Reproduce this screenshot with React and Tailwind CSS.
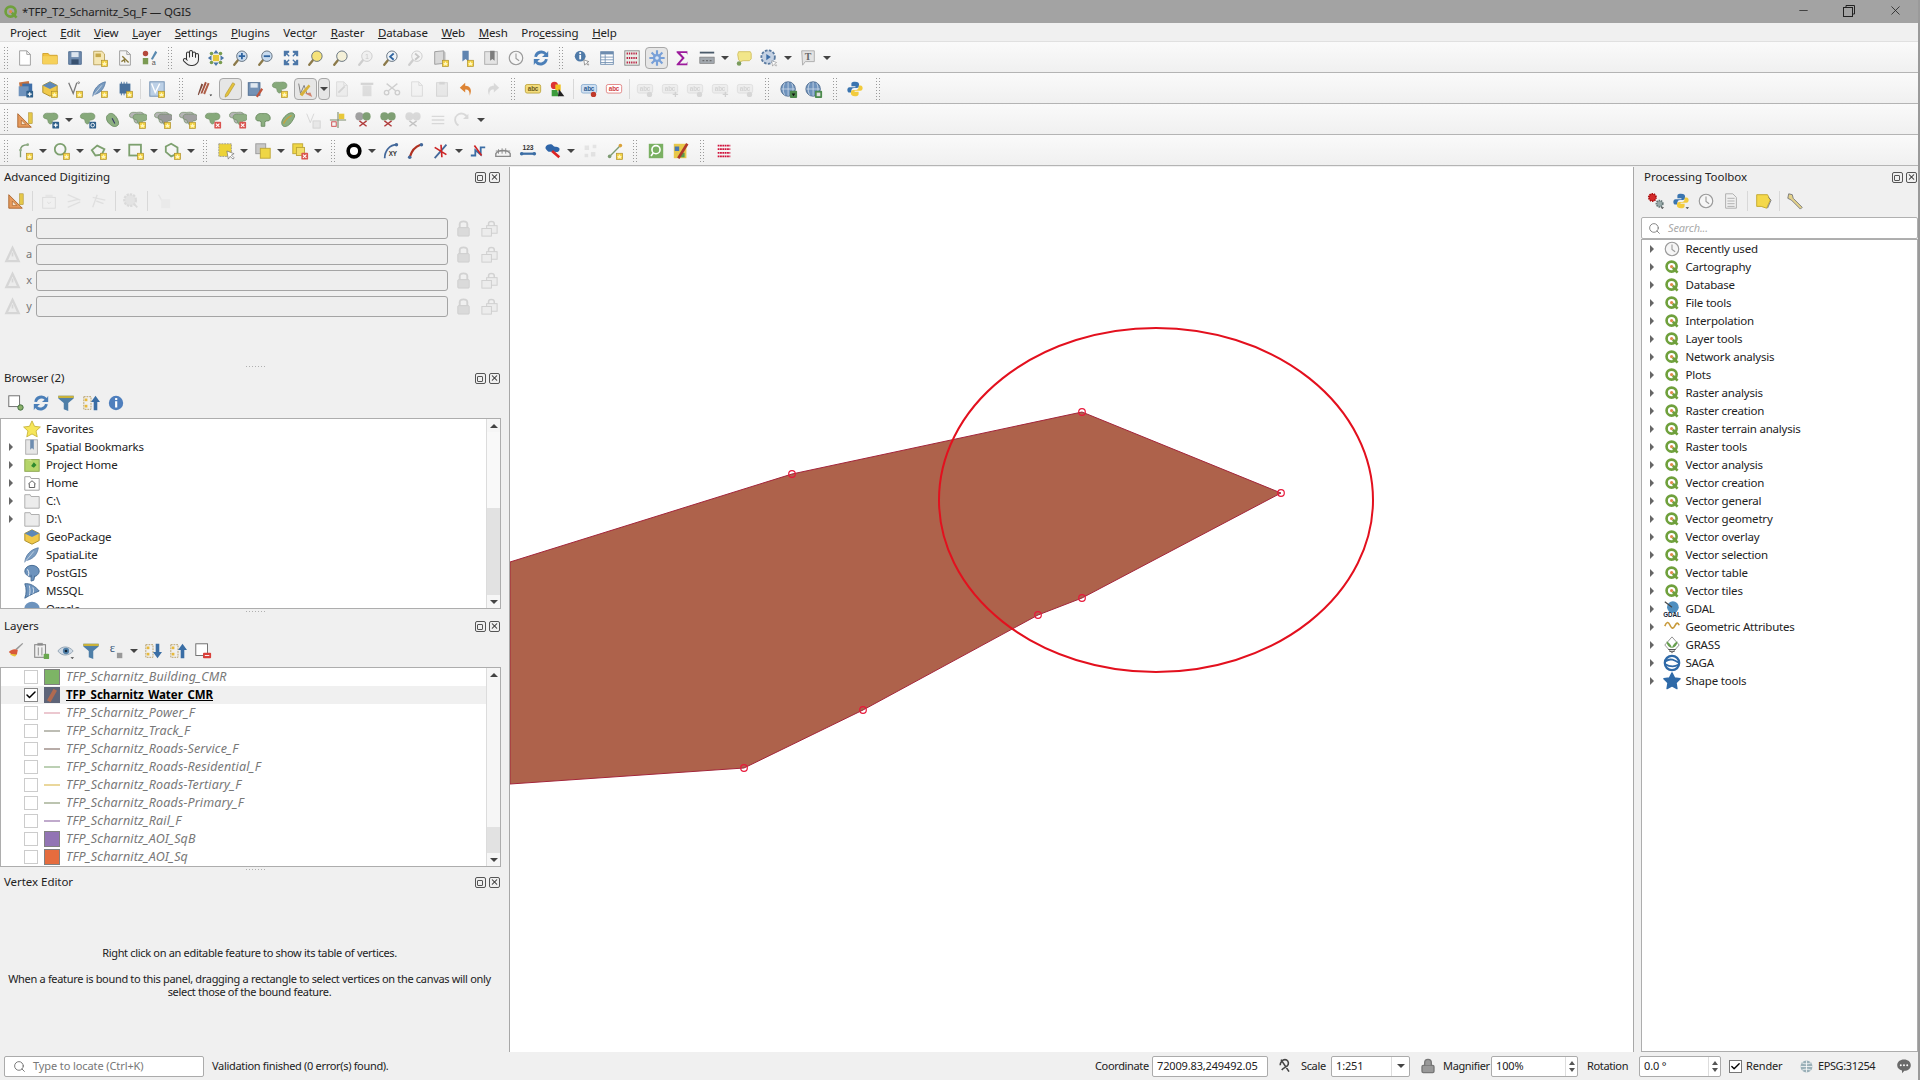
import React from 'react';
import { Hand, Lock, Search, Check, X, Minus } from 'lucide-react';

const S = ({ children, s = 18, v = '0 0 20 20' }) => <svg viewBox={v} width={s} height={s} className="block shrink-0">{children}</svg>;
const Star = () => <g><rect x="11.5" y="12.5" width="7" height="7" fill="#f3d347" stroke="#a8892a" strokeWidth=".7" /><path d="M15 13.5l.9 2 2 .1-1.5 1.2.5 1.9-1.9-1-1.9 1 .5-1.9-1.5-1.2 2-.1z" fill="#fff6c0" /></g>;
const Plus = () => <g><rect x="11.5" y="12" width="7.5" height="7.5" rx="1" fill="#2e5f8a" /><path d="M15.2 13.5v4.5M13 15.7h4.5" stroke="#fff" strokeWidth="1.3" /></g>;
const Cross = () => <g><rect x="11.5" y="12" width="7.5" height="7.5" rx="1" fill="#d9534f" /><path d="M13.3 14l3.8 3.7M17.1 14l-3.8 3.7" stroke="#fff" strokeWidth="1.2" /></g>;
const BlobP = ({ f = '#86a97a', t = '' }) => <path transform={t} d="M1.500 6c0-3 3-4 6-3.500s6-1 8.500.5 2 5.500-.5 6.500-3.500 0-4 2.500-2 3-3.500 2-1-3-2-4.500S1.500 9 1.500 6z" fill={f} stroke="#6a8a60" strokeWidth=".7" />;
const Blob = ({ b, g, f }) => <S>{g && <BlobP f="#b4b4b4" t="translate(-1 -1)" />}<BlobP f={f || (g ? '#8fae84' : '#86a97a')} t={g ? 'translate(3 1)' : ''} />{b}</S>;
const Mag = ({ f = '#d8e6f4', c, r = '#8c7a4a' }) => <S><path d="M7 12L2.500 17.500" stroke={r} strokeWidth="2.600" strokeLinecap="round" /><circle cx="11" cy="8" r="5.800" fill={f} stroke="#5d6b78" strokeWidth="1" />{c}</S>;
const Page = ({ c, f = '#fff' }) => <S><path d="M4 2h8l4 4v12H4z" fill={f} stroke="#9a9a9a" strokeWidth="1" /><path d="M12 2v4h4" fill="none" stroke="#9a9a9a" />{c}</S>;
const Q = () => <S s={16}><circle cx="9.500" cy="9.500" r="6.300" fill="none" stroke="#6fa03c" strokeWidth="3.300" /><path d="M11 11l6 6" stroke="#6fa03c" strokeWidth="3.300" /><circle cx="9.500" cy="9.500" r="2" fill="#e0894a" /></S>;
const Globe = ({ c }) => <S><circle cx="9" cy="10" r="8" fill="#6f93bd" stroke="#47678c" /><path d="M9 2v16M1.500 10h15M5 3.500c-2 4-2 9 0 13M13 3.500c2 4 2 9 0 13" stroke="#d6e2ee" strokeWidth=".8" fill="none" />{c}</S>;
const Lbl = ({ f = '#f3dc7c', c = '#6b5b1a', st = '#c0a640', t = 'abc', b }) => <S><rect x="1.500" y="5" width="17" height="9.500" rx="2" fill={f} stroke={st} /><text x="10" y="12.500" fontSize="7" fontWeight="700" textAnchor="middle" fill={c} fontFamily="Liberation Sans, sans-serif">{t}</text>{b}</S>;
const Arrow2 = ({ c, d }) => <S><rect x="2" y="3" width="8" height="14" fill="none" stroke="#b39b60" strokeDasharray="2 1" /><rect x="3" y="5" width="3" height="3" fill="#e8b93a" /><rect x="3" y="12" width="3" height="3" fill="#e8b93a" /><path d={d} fill={c || '#3a6ea5'} /></S>;

const I = {
  new: <Page />,
  open: <S><path d="M2 5h6l1.500 2H18v9.500H2z" fill="#f2c23f" stroke="#cfa02b" /><rect x="2" y="8" width="16" height="8.500" fill="#f6d15a" /></S>,
  save: <S><path d="M3 3h14v14H3z" fill="#6f8caf" stroke="#4e6b8f" /><rect x="6" y="3.500" width="8" height="5.500" fill="#dde6ef" /><rect x="6" y="11.500" width="8" height="5.500" fill="#37506f" /></S>,
  saveas: <S><path d="M3 2.500h9l3 3v12H3z" fill="#f5e7b5" stroke="#b9a25a" /><rect x="5" y="5" width="6" height="4" fill="#c7a94a" /><Star /></S>,
  print: <Page f="#f4f4f4" c={<path d="M7 8l7 7M6 14l3-2 1 3" stroke="#8a7a3a" strokeWidth="1.500" fill="none" />} />,
  style: <S><circle cx="5" cy="5" r="3" fill="#b5493c" /><rect x="2" y="10" width="6" height="7" fill="#7b9a52" /><path d="M16 2l-5 9 2 1 5-8z" fill="#5a8ab0" /><text x="14" y="18" fontSize="8" textAnchor="middle" fill="#555" fontFamily="Liberation Sans, sans-serif">a</text></S>,
  hand: <Hand size={18} strokeWidth={1.400} color="#333" />,
  pansel: <S><rect x="6.500" y="6.500" width="7" height="7" fill="#e6c838" /><path d="M10 1l3 4H7zM10 19l3-4H7zM1 10l4-3v6zM19 10l-4-3v6z" fill="#4c77a8" /><circle cx="5" cy="5" r="2" fill="#7a9c4f" /><circle cx="15" cy="5" r="2" fill="#7a9c4f" /><circle cx="5" cy="15" r="2" fill="#7a9c4f" /><circle cx="15" cy="15" r="2" fill="#7a9c4f" /></S>,
  zin: <Mag f="#c9dbee" c={<path d="M11 4.500v7M7.500 8h7" stroke="#2f64a0" strokeWidth="2" />} />,
  zout: <Mag f="#c9dbee" c={<path d="M7.500 8h7" stroke="#2f64a0" strokeWidth="2" />} />,
  zfull: <S><path d="M2 2h6v2L6 5l2.500 2.500-1 1L5 6 4 8H2zM18 2v6h-2l-1-2-2.500 2.500-1-1L14 5l-2-1V2zM2 18v-6h2l1 2 2.500-2.500 1 1L6 15l2 1v2zM18 18h-6v-2l2-1-2.500-2.500 1-1L15 14l1-2h2z" fill="#4c77a8" /></S>,
  zsel: <Mag f="#f5e27a" />,
  zlayer: <Mag f="#f4f0d8" />,
  znat: <Mag c={<text x="11" y="11" fontSize="8" textAnchor="middle" fill="#666" fontFamily="Liberation Sans, sans-serif">1</text>} />,
  zlast: <Mag f="#eef3f8" c={<path d="M13 5l-4 3.500 4 3.500" stroke="#2f64a0" strokeWidth="2" fill="none" />} />,
  znext: <Mag f="#eef3f8" c={<path d="M9 5l4 3.500-4 3.500" stroke="#2f64a0" strokeWidth="2" fill="none" />} />,
  newmap: <S><path d="M3 3l10-1v14l-10 1z" fill="#d9d9d9" stroke="#999" /><path d="M13 2l2 2v12l-2 0z" fill="#bbb" /><Star /></S>,
  bmnew: <S><path d="M6 2h7v12l-3.500-3L6 14z" fill="#5f84b0" /><Star /></S>,
  bmshow: <S><rect x="3" y="3" width="14" height="14" fill="#e4e4e4" stroke="#aaa" /><path d="M9 2h5v11l-2.500-2L9 13z" fill="#7d7d7d" /></S>,
  clock: <S><circle cx="10" cy="10" r="7.500" fill="#f6f6f6" stroke="#9a9a9a" strokeWidth="1.300" /><path d="M10 5v5.500l3.500 2.500" stroke="#9a9a9a" strokeWidth="1.200" fill="none" /></S>,
  refresh: <S><path d="M16.500 4.500A8 8 0 002.500 8.500l3 .5a5 5 0 018.500-2.500L11 9h7V2zM3.500 15.500A8 8 0 0017.500 11.500l-3-.5A5 5 0 016 13.500L9 11H2v7z" fill="#4b7fb8" /></S>,
  ident: <S><circle cx="8" cy="8" r="6" fill="#4f7aa8" /><rect x="7" y="6.500" width="2" height="5" fill="#fff" /><rect x="7" y="3.500" width="2" height="2" fill="#fff" /><path d="M12 12l1 6 1.500-2 2.500 2 .5-1-2-2 2-1z" fill="#fff" stroke="#666" strokeWidth=".7" /></S>,
  table: <S><rect x="3" y="3" width="14" height="14" fill="#fff" stroke="#6d8caf" /><rect x="3" y="3" width="14" height="3" fill="#6d8caf" /><path d="M3 9h14M3 12h14M3 15h14M8 6v11" stroke="#6d8caf" strokeWidth=".9" /></S>,
  calc: <S><rect x="2" y="2" width="16" height="16" fill="#e8eee8" stroke="#888" /><path d="M4 5h12M4 10h12M4 15h12" stroke="#b24" strokeWidth="2" strokeDasharray="1.500 1" /></S>,
  stats: <S><circle cx="10" cy="10" r="4.500" fill="#78a0d8" /><path d="M10 1.500v17M1.500 10h17M4 4l12 12M16 4L4 16" stroke="#78a0d8" strokeWidth="2.400" /><circle cx="10" cy="10" r="2" fill="#dce8f6" /></S>,
  sigma: <S><path d="M4 2.500h12v4l-1-2H8l5 5.500-5.500 6H15l1-2v4H4v-1l6-7-6-6z" fill="#9c1a9c" /></S>,
  measure: <S><rect x="2" y="3" width="16" height="2" fill="#4a5a6a" /><rect x="2" y="9" width="16" height="7" fill="#a2a8ae" stroke="#777" strokeWidth=".7" /><path d="M5 13h2M9 13h2M13 13h2" stroke="#555" /></S>,
  tip: <S><path d="M4 3h13l1 2v6l-2 2h-7l-3 1-2-2-1-6z" fill="#f2e68a" stroke="#d0c060" /><circle cx="4.500" cy="16" r="2.500" fill="#7a9c5c" /></S>,
  action: <S><circle cx="9" cy="9" r="7.500" fill="#c5d2e3" stroke="#5a7aa0" strokeWidth="2" strokeDasharray="3 1.500" /><path d="M7 5.500l5 3.500-5 3.500z" fill="#3c6ea8" /><path d="M13 13l1 6 1.500-2 2.500 2 .5-1-2-2 2-1z" fill="#fff" stroke="#888" strokeWidth=".6" /></S>,
  ttext: <S><path d="M3 2h14v12H7l-3 4z" fill="#e3e3e3" stroke="#aaa" /><text x="10" y="12" fontSize="11" fontWeight="700" textAnchor="middle" fill="#666" fontFamily="Liberation Serif, serif">T</text></S>,
  dsm: <S><rect x="4" y="2" width="11" height="11" fill="#c4713f" transform="rotate(-8 9 7)" /><rect x="7" y="4" width="11" height="11" fill="#3f6fa8" /><rect x="3" y="7" width="11" height="11" fill="#6f93bd" /><Plus /></S>,
  gpkg: <S><path d="M10 2l8 4v8l-8 4-8-4V6z" fill="#f0c94a" stroke="#a88a22" /><path d="M10 2l8 4-8 4-8-4z" fill="#5d88b8" /><Star /></S>,
  vshp: <S><path d="M3 3l5 12 4-12" fill="none" stroke="#777" strokeWidth="1.400" /><circle cx="14" cy="3" r="1" fill="none" stroke="#777" /><Star /></S>,
  feat: <S><path d="M2 18c1-8 6-14 14-16-1 6-4 12-12 14z" fill="#7a9cc0" stroke="#5c7fa8" /><path d="M2 18l10-12" stroke="#fff" strokeWidth=".6" /><Star /></S>,
  chip: <S><rect x="4" y="4" width="12" height="11" fill="#48709c" /><path d="M6 2v3M9 2v3M12 2v3M6 14v3M9 14v3" stroke="#48709c" /><Star /></S>,
  vmesh: <S><rect x="2" y="2" width="16" height="16" fill="#bcd0e6" stroke="#6d8caf" /><path d="M4 4l4 10 5-10" fill="none" stroke="#fff" strokeWidth="1.500" /><Star /></S>,
  edits: <S><path d="M8 15L13 3l2 1-5 12z" fill="#b06048" /><path d="M5 15L10 2l2 1-5 12z" fill="#a4503c" /><path d="M2 16L6 4l2 1-5 12z" fill="#7d4a3c" /><path d="M15 16l3 0-1.500 2z" fill="#333" /></S>,
  pencil: <S><path d="M5 16l8-13 2.500 1.500L7.500 17.500 4.500 19z" fill="#e4c23a" stroke="#a88a22" strokeWidth=".6" /></S>,
  saveedit: <S><rect x="2.500" y="3" width="13" height="14" fill="#7391b5" stroke="#4e6b8f" /><rect x="5" y="3.500" width="8" height="5" fill="#e0e8f0" /><path d="M11 18l6-9 2 1.500-6 9z" fill="#c0553c" /></S>,
  addstar: <Blob b={<Star />} />,
  vertex: <S><path d="M3 4l2 11 4-9 3 9" stroke="#777" fill="none" /><path d="M4 16L14 5l2 2L7 18z" fill="#d7b23a" /><path d="M10 15l6-1 2 5z" fill="#c75a3a" opacity=".7" /></S>,
  attr: <Page f="#ddd" c={<path d="M6 14l7-7" stroke="#888" strokeWidth="2" />} />,
  del: <S><path d="M5 6h10v12H5z" fill="#aaa" /><rect x="3" y="3" width="14" height="2.500" fill="#888" /></S>,
  cut: <S><circle cx="4" cy="14" r="2.500" fill="none" stroke="#777" strokeWidth="1.500" /><circle cx="16" cy="14" r="2.500" fill="none" stroke="#777" strokeWidth="1.500" /><path d="M6 12L16 4M14 12L4 4" stroke="#777" strokeWidth="1.500" /></S>,
  copy: <Page f="#eee" />,
  paste: <S><rect x="4" y="3" width="12" height="15" fill="#ccc" stroke="#888" /><rect x="7" y="2" width="6" height="3" fill="#888" /></S>,
  undo: <S><path d="M8 3L2 8.500 8 14v-3.500c4 0 5 2 5 7 3-6 1-11-5-11z" fill="#dd8434" /></S>,
  redo: <S><path d="M12 3l6 5.500L12 14v-3.500c-4 0-5 2-5 7-3-6-1-11 5-11z" fill="#999" /></S>,
  labY: <Lbl />,
  labC: <S><circle cx="6" cy="6" r="4" fill="#d33" /><rect x="7" y="5" width="6" height="7" fill="#f0c020" /><path d="M3 11h6l2 7H3z" fill="#3c9c3c" /><path d="M11 10l6 8h-7z" fill="#222" /></S>,
  labP: <Lbl f="#cfe0f2" c="#2a5b90" st="#8fb0d0" b={<circle cx="15" cy="16" r="3" fill="#c0392b" />} />,
  labR: <Lbl f="#fff" c="#d04040" st="#e08080" />,
  lab1: <Lbl f="#ddd" c="#888" st="#aaa" b={<circle cx="15" cy="16" r="3" fill="#999" />} />,
  lab2: <Lbl f="#ddd" c="#888" st="#aaa" b={<path d="M13 16h6M16 13v6" stroke="#888" strokeWidth="1.500" />} />,
  globe1: <Globe c={<g><rect x="11" y="12" width="8" height="8" rx="1" fill="#4c8a4c" /><path d="M13 15l2 3 2-3z" fill="#111" /></g>} />,
  globe2: <Globe c={<g><rect x="11" y="12" width="8" height="8" rx="1" fill="#4c8a4c" /><rect x="13" y="14" width="4" height="4" fill="#ddd" /></g>} />,
  python: <S><path d="M10 2c-4 0-4 1.500-4 3v2h4.500v1H4C2 8 1.500 10 1.500 11s.5 3 2.500 3h2v-2c0-1.500 1-3 3-3h3c1.500 0 2.500-1 2.500-2.500V5c0-1.500-1-3-4.500-3z" fill="#3b75b0" /><path d="M10 18c4 0 4-1.500 4-3v-2H9.500v-1H16c2 0 2.500-2 2.500-3s-.5-3-2.500-3h-2v2c0 1.500-1 3-3 3H8c-1.500 0-2.500 1-2.500 2.500V15c0 1.500 1 3 4.500 3z" fill="#f2cb3c" /></S>,
  ruler: <S><path d="M2 3v15h15z" fill="#e69a5c" stroke="#a8622a" /><path d="M6 10v5h5z" fill="#f5e5d0" stroke="#a8622a" strokeWidth=".7" /><rect x="14" y="2" width="4" height="12" fill="#e5c84a" stroke="#a88a22" strokeWidth=".6" /></S>,
  addp: <Blob b={<Plus />} />,
  addrec: <Blob b={<g><rect x="11.500" y="12" width="7.500" height="7.500" rx="1" fill="#2e5f8a" /><circle cx="15.200" cy="15.700" r="2" fill="none" stroke="#fff" /></g>} />,
  leaf: <S><path d="M3 6c2-4 6-4 8-2 3 2 6 8 5 11-2 3-6 3-9 0-3-2-5-6-4-9z" fill="#8caf80" stroke="#6a8a60" /><path d="M9 8l3 6" stroke="#336" strokeWidth="1.200" /></S>,
  b1: <Blob b={<Star />} g />,
  b2: <Blob b={<Star />} g f="#999" />,
  b3: <Blob b={<Star />} f="#a0a0a0" g />,
  bx: <Blob b={<Cross />} />,
  bx2: <Blob b={<Cross />} g />,
  bsplit: <S><path d="M2 8c0-4 4-6 8-5 4-1 8 1 8 5 0 3-2 3-4 3l-2 1v5H8v-5l-2-1c-2 0-4 0-4-3z" fill="#8caf80" stroke="#6a8a60" /></S>,
  bean: <S><path d="M3 13c0-4 6-11 11-11 3 0 4 3 3 5-2 4-5 9-9 10-3 1-5-1-5-4z" fill="#8caf80" stroke="#6a8a60" /><path d="M5 14c2-4 5-7 9-9" stroke="#c9a23a" strokeWidth="1.500" fill="none" /></S>,
  vsm: <S><path d="M3 3l4 10 4-10" stroke="#888" fill="none" /><rect x="10" y="11" width="8" height="8" fill="#ccc" stroke="#888" /></S>,
  spl: <S><path d="M10 1v18M1 10h18" stroke="#7a8a6a" strokeWidth="1.200" /><rect x="11" y="3" width="6" height="6" fill="#e8c83a" /><rect x="3" y="12" width="5" height="5" fill="none" stroke="#c44" /></S>,
  cutb: <S><circle cx="6" cy="6" r="4.500" fill="#a0a0a0" /><circle cx="14" cy="6" r="4.500" fill="#7f9f74" /><path d="M6 11l8 6M14 11l-8 6" stroke="#b03a3a" strokeWidth="1.500" /></S>,
  cutg: <S><circle cx="6" cy="6" r="4.500" fill="#7f9f74" /><circle cx="14" cy="6" r="4.500" fill="#7f9f74" /><path d="M6 11l8 6M14 11l-8 6" stroke="#b03a3a" strokeWidth="1.500" /></S>,
  lines: <S><path d="M3 6h14M3 10h14M3 14h14" stroke="#999" strokeWidth="1.500" /></S>,
  rot: <S><path d="M5 16a7 7 0 1 1 10-8" stroke="#999" fill="none" strokeWidth="2" /><path d="M16 3v6h-6z" fill="#999" /></S>,
  dLine: <S><path d="M5 17V9c0-3 2-6 8-6" stroke="#7d9b72" strokeWidth="1.500" fill="none" /><circle cx="5" cy="9" r="1.500" fill="#8fae84" /><circle cx="13" cy="3" r="1.500" fill="#8fae84" /><Star /></S>,
  dCirc: <S><circle cx="8" cy="8" r="6" fill="none" stroke="#7da06f" strokeWidth="2" /><Star /></S>,
  dCirc2: <S><path d="M2 9l6-5 8 4-3 6-7 1z" fill="none" stroke="#7da06f" strokeWidth="2" /><Star /></S>,
  dRect: <S><rect x="2.500" y="3" width="13" height="12" fill="none" stroke="#7da06f" strokeWidth="2" /><Star /></S>,
  dPoly: <S><path d="M8 2l7 4v7l-7 3-6-5V5z" fill="none" stroke="#7da06f" strokeWidth="2" /><Star /></S>,
  sel: <S><rect x="2" y="2" width="14" height="14" fill="#edd338" stroke="#999" strokeDasharray="2 1" /><path d="M11 10l1.500 9 2-3 3.500 3 1-1.500-3-3 3-1.500z" fill="#fff" stroke="#666" strokeWidth=".7" /></S>,
  sel2: <S><rect x="2" y="2" width="11" height="11" fill="#c8c8c8" stroke="#999" /><rect x="7" y="7" width="11" height="11" fill="#efd645" stroke="#bda534" /></S>,
  sel3: <S><rect x="2" y="2" width="11" height="11" fill="#efd645" stroke="#bda534" /><rect x="6" y="6" width="9" height="9" fill="#f1dd6a" stroke="#bda534" /><Cross /></S>,
  ring: <S><circle cx="10" cy="10" r="6.500" fill="#fff" stroke="#000" strokeWidth="4" /></S>,
  xy: <S><path d="M3 18C3 10 8 3 17 3" stroke="#44689a" strokeWidth="2" fill="none" /><circle cx="16" cy="3" r="2" fill="#44689a" /><text x="12" y="16" fontSize="7" fontWeight="700" textAnchor="middle" fill="#333" fontFamily="Liberation Sans, sans-serif">XY</text></S>,
  arc: <S><path d="M3 17C5 10 9 5 15 3" stroke="#b03020" strokeWidth="2.500" fill="none" /><circle cx="3" cy="17" r="2" fill="#44689a" /><circle cx="16" cy="3" r="2" fill="#44689a" /></S>,
  snap: <S><path d="M3 18L16 3" stroke="#44689a" strokeWidth="2" /><path d="M3 6l13 8M10 3l1 14" stroke="#cc2222" strokeWidth="1.800" /></S>,
  topo: <S><path d="M2 15h5V9l6 5 0-8 5 0" stroke="#3c6ea5" strokeWidth="2" fill="none" /><path d="M6 4l8 11" stroke="#cc2222" strokeWidth="1.800" /></S>,
  bridge: <S><path d="M2 13c3-5 13-5 16 0v3H2z" fill="none" stroke="#888" strokeWidth="1.500" /><path d="M2 10h16M5 8v5M9 7v6M13 7v6" stroke="#888" /></S>,
  n123: <S><text x="10" y="9" fontSize="7.500" fontWeight="700" textAnchor="middle" fill="#333" fontFamily="Liberation Sans, sans-serif">123</text><path d="M2 13h16" stroke="#3c6ea5" strokeWidth="2.500" /><circle cx="3" cy="13" r="2" fill="#3c6ea5" /><circle cx="17" cy="13" r="2" fill="#3c6ea5" /></S>,
  tra: <S><path d="M2 5c2-3 7-3 8-1s6 1 7 3-1 5-4 4-7 1-9-1-3-3-2-5z" fill="#2f65a8" /><path d="M9 10l8 7" stroke="#d22" strokeWidth="3" /></S>,
  nodes: <S><path d="M4 4h5v5H4zM11 11h5v5h-5zM4 13h4v4H4zM13 3h4v4h-4z" fill="#bbb" /></S>,
  tree: <S><path d="M4 16L16 4" stroke="#7d9b72" strokeWidth="1.500" /><circle cx="4" cy="16" r="2" fill="#7d9b72" /><circle cx="16" cy="4" r="2" fill="#d9a23a" /><Star /></S>,
  qsearch: <S><rect x="2" y="2" width="16" height="16" fill="#7ab062" /><circle cx="10" cy="8.500" r="4.500" fill="none" stroke="#fff" strokeWidth="1.800" /><path d="M7 12l-2.500 3.500" stroke="#fff" strokeWidth="1.800" /></S>,
  qdig: <S><rect x="2" y="2" width="14" height="16" fill="#e8c84a" /><rect x="3" y="5" width="5" height="5" fill="#4a78b0" /><rect x="9" y="12" width="5" height="5" fill="#5a9c4c" /><path d="M17 2L7 18" stroke="#b03a2a" strokeWidth="3" /></S>,
  dots: <S><path d="M3 4h14M3 8h14M3 12h14M3 16h14" stroke="#d0103a" strokeWidth="2" strokeDasharray="2 .6" /></S>,
  warn: <S s={19}><path d="M10 3l6.500 14H3.500z" fill="#ececec" stroke="#d6d6d6" strokeWidth="2.400" /><path d="M10 8v4" stroke="#d6d6d6" strokeWidth="1.800" /></S>,
  lock: <S s={19}><path d="M6 9V5.500c0-4 8-4 8 0V9" fill="none" stroke="#d2d2d2" strokeWidth="2" /><rect x="4" y="9" width="12" height="9" rx="1" fill="#dadada" stroke="#cfcfcf" /></S>,
  lock2: <S s={19}><path d="M9 8V5c0-3 6-3 6 0v4" fill="none" stroke="#d2d2d2" strokeWidth="1.600" /><rect x="7" y="7" width="11" height="8" fill="#ececec" stroke="#cfcfcf" /><rect x="2" y="10" width="10" height="8" fill="#ececec" stroke="#cfcfcf" /></S>,
  pd1: <S><rect x="3" y="6" width="14" height="12" fill="none" stroke="#aaa" /><path d="M6 3h8v3H6z" fill="#ccc" /><path d="M8 11l2 2 2-2" stroke="#aaa" fill="none" /></S>,
  pd2: <S><path d="M3 3l14 6M3 17l14-6M3 11l12-3" stroke="#bbb" strokeWidth="1.600" /></S>,
  pd3: <S><path d="M3 17L8 3M3 6l14 3M7 10l8 3" stroke="#bbb" strokeWidth="1.600" /></S>,
  pd4: <S><circle cx="9" cy="9" r="6.500" fill="#c8c8c8" stroke="#aaa" strokeWidth="2.500" strokeDasharray="2.500 1.200" /><path d="M14 14l3 3" stroke="#aaa" strokeWidth="2" /></S>,
  pd5: <S><path d="M5 3l4 7" stroke="#ccc" strokeWidth="1.500" /><rect x="8" y="8" width="10" height="10" fill="#ddd" /></S>,
  bNew: <S><rect x="2" y="2" width="12" height="12" fill="#fff" stroke="#666" /><circle cx="15" cy="15" r="3" fill="#8ab06a" stroke="#3c6a3c" /></S>,
  filter: <S><path d="M1.500 2h17v3l-6 5v9l-5-2v-7L1.500 5z" fill="#4f7fa8" /><rect x="1.500" y="2" width="17" height="2.500" fill="#c9b23a" /></S>,
  expand: <Arrow2 d="M13 18V9H10l5-7 5 7h-3v9z" />,
  expandD: <Arrow2 d="M13 2v9H10l5 7 5-7h-3V2z" />,
  info: <S><circle cx="10" cy="10" r="8" fill="#4f7fbd" /><rect x="9" y="8" width="2.400" height="7" fill="#fff" /><rect x="9" y="4.500" width="2.400" height="2.200" fill="#fff" /></S>,
  brush: <S><path d="M18 2L11 9l-2-1 8-7z" fill="#999" /><path d="M2 11c3-3 7-4 10-2l-1 5c-3 2-6 0-9-3z" fill="#d85a3a" /><path d="M3 13c2 2 4 3 6 3l2-2" fill="#e8c43a" /></S>,
  layAdd: <S><rect x="6" y="1" width="6" height="3" fill="#999" /><rect x="3" y="3" width="12" height="14" fill="none" stroke="#888" strokeWidth="1.200" /><path d="M7 6v9M11 6v9" stroke="#888" /><rect x="13" y="13" width="6" height="6" rx="1" fill="#6aa84f" /></S>,
  eye: <S><path d="M1 10c4-6 12-6 17 0-5 6-13 6-17 0z" fill="#cfd9e4" stroke="#8fa0b0" /><circle cx="10" cy="10" r="3.500" fill="#4f7fa8" /><circle cx="10" cy="10" r="1.500" fill="#123" /><path d="M15 17l2 2 2-2z" fill="#444" /></S>,
  eps: <S><text x="6" y="11" fontSize="14" fill="#35557a" textAnchor="middle" fontFamily="Liberation Serif, serif">ε</text><rect x="11" y="12" width="6" height="6" fill="#999" /></S>,
  layDel: <S><rect x="2" y="2" width="13" height="13" fill="#fff" stroke="#666" /><rect x="10" y="12" width="9" height="6" rx="1" fill="#d9403a" /><path d="M12 15h5" stroke="#fff" /></S>,
  star: <S><path d="M10 1l2.800 6 6.500.8-4.800 4.400 1.300 6.500L10 15.500 4.200 18.700l1.300-6.500L.7 7.800 7.200 7z" fill="#f6e65a" stroke="#c8b43a" /></S>,
  bookm: <S><rect x="3" y="2" width="13" height="16" fill="#e6e6e6" stroke="#aaa" /><path d="M8 2h4v11l-2-2-2 2z" fill="#6e8db0" /></S>,
  projh: <S><rect x="2" y="4" width="16" height="13" fill="#b5d56a" stroke="#88a24a" /><path d="M9 11l3-4 3 3-3 3z" fill="#2e8a2e" /><path d="M2 4h7l1 2" fill="#cde08a" /></S>,
  homef: <S><path d="M2 3h6l1 2h9v13H2z" fill="#fff" stroke="#999" /><path d="M6 11l4-3.500 4 3.500M7 10.500V15h6v-4.500" fill="none" stroke="#555" /></S>,
  folder: <S><path d="M2 3h6l1 2h9v13H2z" fill="#ececec" stroke="#a8a8a8" /></S>,
  pg: <S><ellipse cx="10" cy="8" rx="8" ry="6.500" fill="#6d93bd" stroke="#3f6690" /><path d="M9 12v7l3-1 1-5" fill="#6d93bd" stroke="#3f6690" /><path d="M5 6c2 3 2 6 0 8" stroke="#fff" fill="none" /></S>,
  ms: <S><path d="M2 2c6-1 12 3 16 8-5 2-11 5-16 8 2-5 2-11 0-16z" fill="#6d93bd" stroke="#3f6690" /><path d="M7 4c1 4 1 8 0 11M11 6c1 3 1 5 0 7" stroke="#dfe8f0" fill="none" /></S>,
  orc: <S><ellipse cx="10" cy="9" rx="8.500" ry="7" fill="#6d93bd" /></S>,
  gear: <S><circle cx="6" cy="6" r="4" fill="#d42a2a" stroke="#a11" strokeDasharray="1.500 1" strokeWidth="2" /><circle cx="14" cy="13" r="3.500" fill="#9aa" stroke="#677" strokeDasharray="1.500 1" strokeWidth="2" /><path d="M15 17l2 2 2-2z" fill="#444" /></S>,
  pyd: <S><path d="M10 2c-4 0-4 1.500-4 3v2h4.500v1H4C2 8 1.500 10 1.500 11s.5 3 2.500 3h2v-2c0-1.500 1-3 3-3h3c1.500 0 2.500-1 2.500-2.500V5c0-1.500-1-3-4.500-3z" fill="#3b75b0" /><path d="M10 18c4 0 4-1.500 4-3v-2H9.500v-1H16c2 0 2.500-2 2.500-3s-.5-3-2.500-3h-2v2c0 1.500-1 3-3 3H8c-1.500 0-2.500 1-2.500 2.500V15c0 1.500 1 3 4.500 3z" fill="#f2cb3c" /><path d="M15 17l2 2 2-2z" fill="#444" /></S>,
  doc: <S><path d="M4 2h8l4 4v12H4z" fill="#f0f0f0" stroke="#aaa" /><path d="M6 7h8M6 10h8M6 13h8M6 16h8" stroke="#aaa" /></S>,
  tag: <S><path d="M3 3h12l3 6-4 9-6-2H3z" fill="#f4d84a" stroke="#c2a72a" /><path d="M16 6l3 3-4 9" stroke="#777" fill="none" /></S>,
  wrench: <S><path d="M3 2l4 1 1 4 10 10-2 2L6 9 2 7z" fill="#e4d28a" stroke="#777" /></S>,
  gdal: <S><circle cx="11" cy="8" r="6.500" fill="#4f8fc0" /><path d="M2 2l8 6" stroke="#444" strokeWidth="1.300" /><text x="10" y="18.500" fontSize="7" fontWeight="700" textAnchor="middle" fill="#123" fontFamily="Liberation Sans, sans-serif">GDAL</text></S>,
  wave: <S><path d="M2 9c2-5 4-5 5.500-1.500S11 13 13 9s3.500-4.500 5-1" stroke="#c89a3a" strokeWidth="1.800" fill="none" /></S>,
  grass: <S><path d="M10 1l8 9-8 9-8-9z" fill="#fff" stroke="#888" /><path d="M10 13C9 9 5 6 4 6c0 4 3 7 6 7 3 0 6-3 6-7-1 0-5 3-6 7z" fill="#68a050" /><path d="M6 15h8M7 17h6" stroke="#444" /></S>,
  saga: <S><circle cx="10" cy="10" r="8" fill="none" stroke="#2f6aa8" strokeWidth="2.500" /><path d="M3 8c5-4 10-1 15 2M2 11c5 3 10 4 15 1" stroke="#2f6aa8" strokeWidth="2" fill="none" /></S>,
  shape: <S><path d="M10 1l2.800 5.500 6.200 1-4.500 4.500 1 6.500L10 15.500 4.500 18.500l1-6.500L1 7.500l6.200-1z" fill="#2f6aa8" strokeLinejoin="round" stroke="#2f6aa8" strokeWidth="1.500" /></S>,
  gpkg0: <S><path d="M10 2l8 4v8l-8 4-8-4V6z" fill="#f0c94a" stroke="#a88a22" /><path d="M10 2l8 4-8 4-8-4z" fill="#5d88b8" /></S>,
  feat0: <S><path d="M2 18c1-8 6-14 15-16-1 6-4 12-13 14z" fill="#7a9cc0" stroke="#5c7fa8" /><path d="M2 18l10-12" stroke="#fff" strokeWidth=".6" /></S>,
};

const Arrow = () => <span className="block w-0 h-0 border-x-[4px] border-x-transparent border-t-[4px] border-t-[#444]" />;
const Handle = () => <span className="block w-[6px] h-[24px] bg-[radial-gradient(#9a9a9a_0.6px,transparent_0.8px)] bg-[length:3px_3px]" />;

function Tools({ items }) {
  return <>{items.map((t, k) => {
    const n = parseFloat(t.slice(1));
    if (t[0] === 'h' && n) return <span key={k} className="flex justify-center items-center shrink-0" style={{ width: n }}><Handle /></span>;
    if (t[0] === 'g' && n) return <span key={k} className="shrink-0" style={{ width: n }} />;
    if (t[0] === 's' && n) return <span key={k} className="flex justify-center shrink-0" style={{ width: n }}><span className="block w-px h-[20px] bg-[#d8d8d8]" /></span>;
    if (t === 'v') return <span key={k} className="flex justify-center shrink-0 w-[12px]"><Arrow /></span>;
    if (t === 'V') return <span key={k} className="flex justify-center shrink-0 w-[14px]"><Arrow /></span>;
    if (t === 'w') return <span key={k} className="flex justify-center items-center shrink-0 w-[12px] h-[22px] bg-[#e6e6e6] border border-[#a8a8a8] rounded-sm"><Arrow /></span>;
    if (t[0] === '~') return <span key={k} className="flex justify-center items-center w-[25px] shrink-0 opacity-30 grayscale">{I[t.slice(1)]}</span>;
    if (t[0] === '*') return <span key={k} className="flex justify-center items-center w-[25px] shrink-0"><span className="flex justify-center items-center w-[23px] h-[22px] bg-[#e6e6e6] border border-[#a8a8a8] rounded-sm">{I[t.slice(1)]}</span></span>;
    return <span key={k} className="flex justify-center items-center w-[25px] shrink-0">{I[t]}</span>;
  })}</>;
}

const Bar = ({ items }) => <div className="flex items-center h-[31px] pt-[1px] bg-linear-to-b from-[#fafafa] to-[#f0f0f0] border-b border-[#b4b4b4]"><Tools items={items} /></div>;

const rows = [
  ['h12', 'new', 'open', 'save', 'saveas', 'print', 'style', 'h16', 'hand', 'pansel', 'zin', 'zout', 'zfull', 'zsel', 'zlayer', '~znat', 'zlast', '~znext', 'newmap', 'bmnew', 'bmshow', 'clock', 'refresh', 'h16', 'ident', 'table', 'calc', '*stats', 'sigma', 'measure', 'v', 'tip', 'action', 'V', 'ttext', 'V'],
  ['h12', 'dsm', 'gpkg', 'vshp', 'feat', 'chip', 's7', 'vmesh', 'h23.5', 'edits', '*pencil', 'saveedit', 'addstar', '*vertex', 'w', '~attr', '~del', '~cut', '~copy', '~paste', 'undo', '~redo', 'h16', 'labY', 'labC', 's6', 'labP', 'labR', 's6', '~lab1', '~lab2', '~lab1', '~lab2', '~lab1', 'h19', 'globe1', 'globe2', 'h16', 'python', 'h20'],
  ['h12', 'ruler', 'g1', 'addp', 'v', 'addrec', 'leaf', 'b1', 'b2', 'b3', 'bx', 'bx2', 'bsplit', 'bean', '~vsm', 'spl', 'cutb', 'cutg', '~cutg', '~lines', '~rot', 'v'],
  ['h12', 'dLine', 'v', 'dCirc', 'v', 'dCirc2', 'v', 'dRect', 'v', 'dPoly', 'v', 'h16', 'sel', 'v', 'sel2', 'v', 'sel3', 'v', 'h17', 'ring', 'v', 'xy', 'arc', 'snap', 'v', 'topo', 'bridge', 'n123', 'tra', 'v', '~nodes', 'tree', 'h16', 'qsearch', 'qdig', 'h18', 'dots'],
];

const DockTitle = ({ children, right }) => (
  <div className={`flex items-center h-[20px] pl-[4px] shrink-0 ${right ? 'pr-[1px]' : 'pr-[9px]'}`}>
    <span className="flex-1 text-[#222] text-[11.5px] tracking-[-0.05px]">{children}</span>
    <span className="flex gap-[3px]">
      <span className="relative w-[11px] h-[11px] border border-[#555] rounded-[2px] flex items-end justify-start"><span className="block w-[6px] h-[6px] border border-[#555] rounded-[1px] ml-[1px] mb-[1px]" /></span>
      <span className="flex items-center justify-center w-[11px] h-[11px] border border-[#555] rounded-[2px]"><X size={10} strokeWidth={2.800} color="#333" /></span>
    </span>
  </div>
);
const ToolRow = ({ items, h = 'h-[30px]' }) => <div className={`flex items-center shrink-0 ${h}`}><Tools items={items} /></div>;
const Splitter = ({ h = 'h-[4px]' }) => <div className={`flex items-center justify-center shrink-0 ${h}`}><span className="block w-[20px] h-[3px] bg-[radial-gradient(#b0b0b0_0.5px,transparent_0.7px)] bg-[length:3px_3px]" /></div>;
const TriR = () => <span className="block w-0 h-0 border-y-[4px] border-y-transparent border-l-[4px] border-l-[#666]" />;
const Scroll = ({ children }) => (
  <div className="w-[14px] shrink-0 flex flex-col bg-[#f6f6f6] border-l border-[#dcdcdc]">
    <div className="h-[13px] flex items-center justify-center shrink-0"><span className="block w-0 h-0 border-x-[4px] border-x-transparent border-b-[4px] border-b-[#444]" /></div>
    <div className="flex-1 flex flex-col">{children}</div>
    <div className="h-[13px] flex items-center justify-center shrink-0"><span className="block w-0 h-0 border-x-[4px] border-x-transparent border-t-[4px] border-t-[#444]" /></div>
  </div>
);

const Field = ({ l, warn }) => (
  <div className="flex items-center h-[26px] shrink-0">
    <span className="flex justify-center w-[24px] shrink-0">{warn && I.warn}</span>
    <span className="w-[12px] text-[#777] text-center pr-[2px] shrink-0">{l}</span>
    <span className="block w-[412px] h-[21px] bg-[#eeeeee] border border-[#a4a4a4] rounded-[3px] shrink-0" />
    <span className="flex justify-center w-[30px] shrink-0">{I.lock}</span>
    <span className="flex justify-center w-[22px] shrink-0">{I.lock2}</span>
  </div>
);

const browser = [['star', 'Favorites', 0], ['bookm', 'Spatial Bookmarks', 1], ['projh', 'Project Home', 1], ['homef', 'Home', 1], ['folder', 'C:\\', 1], ['folder', 'D:\\', 1], ['gpkg0', 'GeoPackage', 0], ['feat0', 'SpatiaLite', 0], ['pg', 'PostGIS', 0], ['ms', 'MSSQL', 0], ['orc', 'Oracle', 0]];

const layers = [
  ['TFP_Scharnitz_Building_CMR', '#7db465', 'fill'], ['TFP_Scharnitz_Water_CMR', '', 'cur'], ['TFP_Scharnitz_Power_F', '#ecc8d0'], ['TFP_Scharnitz_Track_F', '#bdbdb4'],
  ['TFP_Scharnitz_Roads-Service_F', '#b8aca8'], ['TFP_Scharnitz_Roads-Residential_F', '#bcd0b4'], ['TFP_Scharnitz_Roads-Tertiary_F', '#ead79c'], ['TFP_Scharnitz_Roads-Primary_F', '#bcc4b0'],
  ['TFP_Scharnitz_Rail_F', '#c0aacc'], ['TFP_Scharnitz_AOI_SqB', '#9274b4', 'fill'], ['TFP_Scharnitz_AOI_Sq', '#e56c3e', 'fill'],
];
const tools = ['Cartography', 'Database', 'File tools', 'Interpolation', 'Layer tools', 'Network analysis', 'Plots', 'Raster analysis', 'Raster creation', 'Raster terrain analysis', 'Raster tools', 'Vector analysis', 'Vector creation', 'Vector general', 'Vector geometry', 'Vector overlay', 'Vector selection', 'Vector table', 'Vector tiles'];
const extra = [['gdal', 'GDAL'], ['wave', 'Geometric Attributes'], ['grass', 'GRASS'], ['saga', 'SAGA'], ['shape', 'Shape tools']];

const TTRow = ({ icon, t }) => (
  <div className="flex items-center h-[18px] shrink-0">
    <span className="flex justify-center w-[19.5px] pl-[1px]"><TriR /></span>
    <span className="flex justify-center items-center w-[20px]">{icon}</span>
    <span className="ml-[4px] text-[#222] text-[11.5px] tracking-[-0.2px]">{t}</span>
  </div>
);

const Stat = ({ w, children }) => <span className="block shrink-0 text-[#222] tracking-[-0.35px]" style={{ width: w }}>{children}</span>;
const Spin = () => <span className="flex flex-col items-center gap-[3px] ml-auto w-[12px] border-l border-[#ddd] h-full justify-center"><span className="block w-0 h-0 border-x-[3px] border-x-transparent border-b-[4px] border-b-[#555]" /><span className="block w-0 h-0 border-x-[3px] border-x-transparent border-t-[4px] border-t-[#555]" /></span>;

const Box = ({ className, children }) => <span className={`flex items-center h-[21px] bg-white border border-[#ababab] rounded-[2px] pl-[4px] shrink-0 text-[#222] ${className}`}>{children}</span>;

const menus = [['Pro', 'j', 'ect'], ['', 'E', 'dit'], ['', 'V', 'iew'], ['', 'L', 'ayer'], ['', 'S', 'ettings'], ['', 'P', 'lugins'], ['Vect', 'o', 'r'], ['', 'R', 'aster'], ['', 'D', 'atabase'], ['', 'W', 'eb'], ['', 'M', 'esh'], ['Pro', 'c', 'essing'], ['', 'H', 'elp']];

export default function App() {
  return (
    <div className="w-[1920px] h-[1080px] overflow-hidden flex flex-col bg-[#f0f0f0] border-r-2 border-[#9a9a9a] font-['Noto_Sans',sans-serif] text-[11px] leading-[14px] text-[#222] tracking-[-0.15px]">
      <div className="flex items-center h-[23px] bg-[#a3a3a3] shrink-0">
        <span className="ml-[3px] mr-[3px]"><Q /></span>
        <span className="flex-1 text-[#222] text-[11.5px]">*TFP_T2_Scharnitz_Sq_F — QGIS</span>
        <span className="flex items-center justify-center w-[46px] mb-[2px]"><Minus size={13} strokeWidth={1.400} color="#222" /></span>
        <span className="flex items-center justify-center w-[46px] mb-[2px]"><svg width="12" height="12" viewBox="0 0 12 12" fill="none" stroke="#222"><rect x=".5" y="2.500" width="9" height="9" /><path d="M3 2.500V.5h8.500V9H9.500" /></svg></span>
        <span className="flex items-center justify-center w-[46px] mb-[2px]"><X size={15} strokeWidth={1.300} color="#222" /></span>
      </div>
      <div className="flex items-center h-[19px] pl-[10px] pt-[2px] gap-[13.7px] shrink-0 bg-[#f0f0f0] border-b border-[#e0e0e0] text-[11.5px]">
        {menus.map((m, i) => <span key={i}>{m[0]}<span className="underline">{m[1]}</span>{m[2]}</span>)}
      </div>
      {rows.map((r, i) => <Bar key={i} items={r} />)}
      <div className="h-[1px] bg-[#f0f0f0] shrink-0" />
      <div className="flex h-[885px] shrink-0">
        <div className="w-[509px] shrink-0 flex flex-col">
          <div className="flex flex-col h-[197px] shrink-0">
            <DockTitle>Advanced Digitizing</DockTitle>
            <ToolRow h="h-[28px]" items={['g3.5', 'ruler', 's8', '~pd1', '~pd2', '~pd3', 's7', '~pd4', 's7', '~pd5']} />
            <Field l="d" /><Field l="a" warn /><Field l="x" warn /><Field l="y" warn />
          </div>
          <Splitter />
          <DockTitle>Browser (2)</DockTitle>
          <ToolRow items={['g3', 'bNew', 'refresh', 'filter', 'expand', 'info']} />
          <div className="flex h-[191px] w-[501px] bg-white border border-[#adadad] shrink-0 overflow-hidden">
            <div className="flex-1 pt-[1px] overflow-hidden text-[11.5px]">
              {browser.map((b, i) => (
                <div key={i} className="flex items-center h-[18px]">
                  <span className="flex justify-center w-[20px]">{b[2] ? <TriR /> : null}</span>
                  <span className="flex justify-center w-[20px] ml-[1px]">{I[b[0]]}</span>
                  <span className="ml-[4px]">{b[1]}</span>
                </div>
              ))}
            </div>
            <Scroll><div className="h-[76px] bg-[#f9f9f9]" /><div className="flex-1 bg-[#e2e2e2]" /></Scroll>
          </div>
          <Splitter />
          <div className="h-[3px] shrink-0" />
          <DockTitle>Layers</DockTitle>
          <ToolRow h="h-[31px] pb-[2px]" items={['g3', 'brush', 'layAdd', 'eye', 'filter', 'eps', 'v', 'expandD', 'expand', 'layDel']} />
          <div className="flex h-[200px] w-[501px] bg-white border border-[#adadad] shrink-0 overflow-hidden">
            <div className="flex-1 overflow-hidden">
              {layers.map((l, i) => (
                <div key={i} className={`flex items-center h-[18px] pl-[23px] ${l[2] === 'cur' ? 'bg-[#f0f0f0]' : ''}`}>
                  <span className={`flex items-center justify-center w-[14px] h-[14px] border ${l[2] === 'cur' ? 'border-[#888] bg-white' : 'border-[#ccc] bg-white'} shrink-0`}>{l[2] === 'cur' && <Check size={12} strokeWidth={3} color="#000" />}</span>
                  <span className="flex items-center justify-center w-[16px] h-[16px] ml-[6px] shrink-0">
                    {l[2] === 'fill' && <span className="block w-[16px] h-[16px] border border-[#808080]" style={{ background: l[1] }} />}
                    {l[2] === 'cur' && <span className="flex items-center justify-center w-[16px] h-[16px] bg-[#5e6478]"><span className="block w-[4px] h-[13px] rotate-[30deg] bg-[#b06a50]" /></span>}
                    {!l[2] && <span className="block w-[16px] h-[2px]" style={{ background: l[1] }} />}
                  </span>
                  <span className={`ml-[6px] ${l[2] === 'cur' ? 'font-bold underline text-black text-[11.5px] tracking-[-0.05px]' : 'italic text-[#777] text-[12.5px] tracking-[0.15px]'}`}>{l[0]}</span>
                </div>
              ))}
            </div>
            <Scroll><div className="flex-1" /><div className="h-[26px] bg-[#e2e2e2]" /></Scroll>
          </div>
          <Splitter h="h-[5px]" />
          <DockTitle>Vertex Editor</DockTitle>
          <div className="flex-1 flex flex-col items-center justify-center text-center leading-[13px] text-[#222] tracking-[-0.32px] pr-[10px]">
            <p>Right click on an editable feature to show its table of vertices.</p>
            <p className="mt-[13px]">When a feature is bound to this panel, dragging a rectangle to select vertices on the canvas will only<br />select those of the bound feature.</p>
          </div>
        </div>
        <div className="w-[1125px] shrink-0 bg-white border-x border-[#a8a8a8]">
          <svg viewBox="510 167 1123 885" width="1123" height="885" className="block">
            <path d="M510 562L792 474L1082 412L1281 493L1082 598L1038 615L863 710L744 768L510 784Z" fill="#ae624b" stroke="#a3253a" strokeWidth="1" />
            <ellipse cx="1156" cy="500" rx="217" ry="172" fill="none" stroke="#e3101e" strokeWidth="2" />
            {[[792, 474], [1082, 412], [1281, 493], [1082, 598], [1038, 615], [863, 710], [744, 768]].map(([x, y], i) => <circle key={i} cx={x} cy={y} r="3.300" fill="none" stroke="#e8183a" strokeWidth="1.200" />)}
          </svg>
        </div>
        <div className="w-[6px] shrink-0" />
        <div className="flex-1 flex flex-col min-w-0">
          <DockTitle right>Processing Toolbox</DockTitle>
          <ToolRow h="h-[30px] pb-[2px]" items={['g3.5', 'gear', 'pyd', 'clock', 'doc', 's7', 'tag', 's7', 'wrench']} />
          <div className="flex items-center h-[22px] ml-[1px] bg-white border border-[#b0b0b0] rounded-[2px] shrink-0">
            <span className="ml-[6px]"><Search size={13} strokeWidth={1.600} color="#777" /></span>
            <span className="ml-[7px] italic text-[#aaa]">Search...</span>
          </div>
          <div className="flex-1 bg-white border border-[#adadad] ml-[1px] flex flex-col overflow-hidden">
            <TTRow icon={I.clock} t="Recently used" />
            {tools.map(t => <TTRow key={t} icon={<Q />} t={t} />)}
            {extra.map(e => <TTRow key={e[1]} icon={I[e[0]]} t={e[1]} />)}
          </div>
        </div>
      </div>
      <div className="flex items-center flex-1 pl-[4px] pr-[6px] bg-[#f0f0f0]">
        <span className="flex items-center w-[200px] h-[21px] bg-white border border-[#ababab] rounded-[2px] shrink-0">
          <span className="ml-[8px]"><Search size={13} strokeWidth={1.600} color="#666" /></span>
          <span className="ml-[7px] text-[#777] tracking-[-0.1px]">Type to locate (Ctrl+K)</span>
        </span>
        <span className="ml-[8px] flex-1 tracking-[-0.32px]">Validation finished (0 error(s) found).</span>
        <Stat w={57}>Coordinate</Stat>
        <Box className="w-[116px]">72009.83,249492.05</Box>
        <span className="flex justify-center w-[33px] shrink-0"><S s={16}><path d="M5 2l10 15M4 9c0-4 3-7 6-7s5 3 4 6-6 4-8 7" stroke="#444" strokeWidth="2" fill="none" /></S></span>
        <Stat w={30}>Scale</Stat>
        <Box className="w-[79px]">1:251<span className="ml-auto flex items-center justify-center w-[18px] h-full border-l border-[#ddd]"><Arrow /></span></Box>
        <span className="flex justify-center w-[33px] shrink-0 pl-[2px]"><Lock size={16} strokeWidth={2} color="#777" fill="#999" /></span>
        <Stat w={48}>Magnifier</Stat>
        <Box className="w-[87px]">100%<Spin /></Box>
        <Stat w={9} />
        <Stat w={52}>Rotation</Stat>
        <Box className="w-[82px]">0.0 °<Spin /></Box>
        <span className="flex items-center justify-center ml-[8px] w-[13px] h-[13px] bg-white border border-[#777] shrink-0"><Check size={11} strokeWidth={3} color="#000" /></span>
        <span className="ml-[4px] w-[52px] shrink-0">Render</span>
        <span className="flex justify-center w-[16px] shrink-0"><S s={15}><circle cx="10" cy="10" r="8" fill="#9ab0b8" /><path d="M2 10h16M10 2v16M4 5c4 2 8 2 12 0M4 15c4-2 8-2 12 0" stroke="#fff" fill="none" /></S></span>
        <span className="w-[82px] shrink-0 tracking-[-0.4px] pl-[4px]">EPSG:31254</span>
        <span className="shrink-0"><S s={16}><path d="M10 2c5 0 8.500 3 8.500 7s-3.500 7-8 7l-3 3v-3.500C4 14.500 1.500 12.500 1.500 9c0-4 3.500-7 8.500-7z" fill="#6a6a6a" /><circle cx="6" cy="9" r="1.200" fill="#fff" /><circle cx="10" cy="9" r="1.200" fill="#fff" /><circle cx="14" cy="9" r="1.200" fill="#fff" /></S></span>
      </div>
    </div>
  );
}
